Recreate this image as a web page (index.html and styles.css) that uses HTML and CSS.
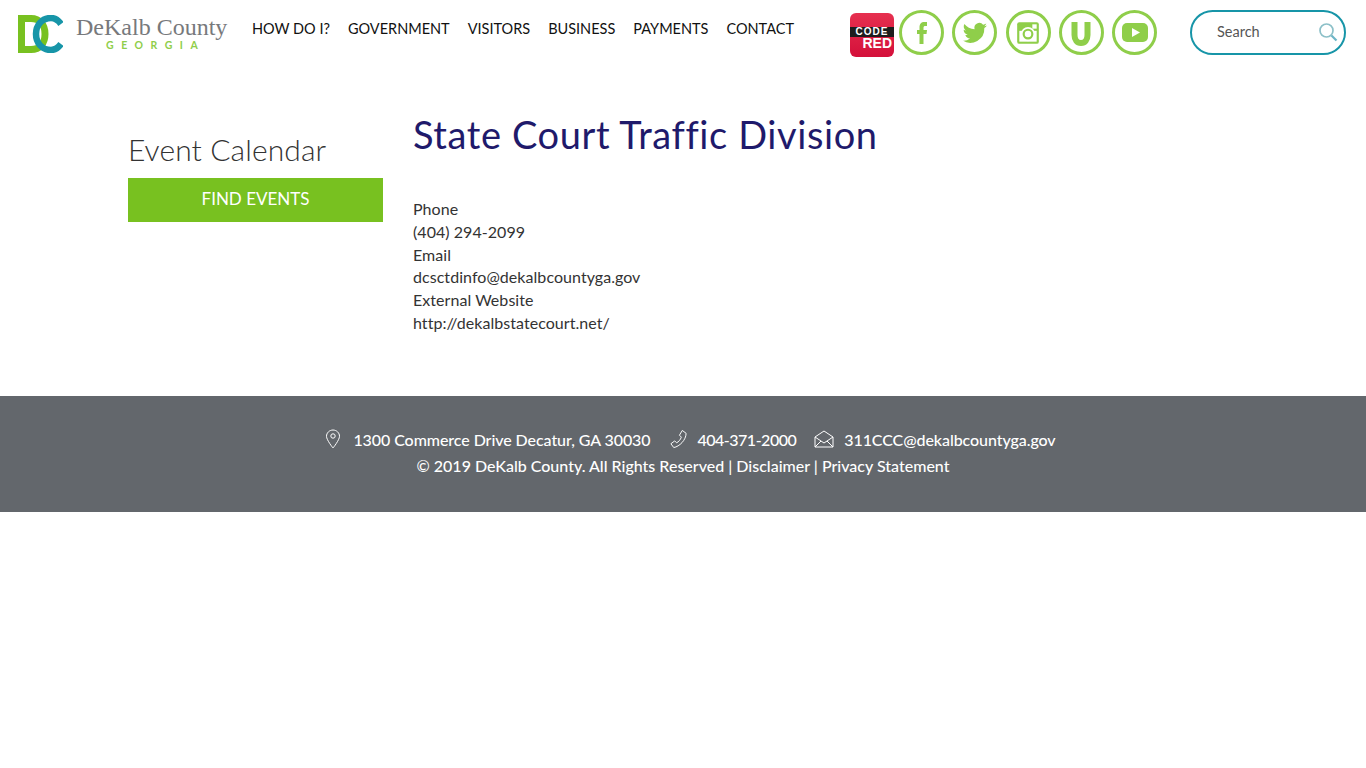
FILE: index.html
```html
<!DOCTYPE html>
<html lang="en">
<head>
<meta charset="utf-8">
<title>State Court Traffic Division</title>
<link rel="stylesheet" href="styles.css">
</head>
<body>
<header class="top">
  <a class="logo" href="#">
    <svg class="logo-mark" width="45" height="38" viewBox="0 0 45 38"><path d="M3.500 3.500h9.500c9 0 14 6.500 14 15.500s-5 15.500-14 15.500H3.500z" fill="none" stroke="#78c120" stroke-width="7"/><path d="M43 9c-2.500-3.500-6-6-10-6-9 0-15 7-15 16s6 16 15 16c4 0 7.500-2.500 10-6" fill="none" stroke="#1795a8" stroke-width="6.500"/></svg>
    <span class="logo-text"><span class="logo-name">DeKalb County</span><span class="logo-sub">GEORGIA</span></span>
  </a>
  <nav class="nav">
    <a href="#">HOW DO I?</a><a href="#">GOVERNMENT</a><a href="#">VISITORS</a><a href="#">BUSINESS</a><a href="#">PAYMENTS</a><a href="#">CONTACT</a>
  </nav>
  <div class="social">
    <a class="codered" href="#"><span class="cr-code">CODE</span><span class="cr-red">RED</span></a>
    <a class="ring" href="#"><svg width="26" height="26" viewBox="0 0 26 26"><path d="M10.500 24V14H8v-4h2.500V7.500c0-3.500 1.500-5.500 5-5.500H18v4h-1.500c-1.500 0-2 .6-2 2v2H18l-.5 4h-3v10z" fill="#8fce4a"/></svg></a>
    <a class="ring" href="#"><svg width="26" height="26" viewBox="0 0 24 24"><path d="M23 5c-1 .4-1.700.6-2.600.7 1-.6 1.700-1.400 2-2.500-.9.5-1.900.9-2.900 1.100a4.600 4.600 0 0 0-7.900 4.200C7.800 8.300 4.400 6.500 2.200 3.700c-1.200 2-.6 4.600 1.400 6-.7 0-1.400-.2-2.100-.6 0 2.200 1.600 4.200 3.700 4.600-.7.200-1.400.2-2.100.1.600 1.900 2.300 3.200 4.300 3.200A9.300 9.300 0 0 1 .6 19a13 13 0 0 0 20-11.600c.9-.7 1.700-1.500 2.400-2.400z" fill="#8fce4a"/></svg></a>
    <a class="ring" href="#"><svg width="26" height="26" viewBox="0 0 24 24"><path d="M4 2h16a2 2 0 0 1 2 2v16a2 2 0 0 1-2 2H4a2 2 0 0 1-2-2V4a2 2 0 0 1 2-2z" fill="#8fce4a"/><rect x="4" y="10" width="16" height="10" fill="#fff"/><circle cx="12" cy="13" r="6.500" fill="#fff"/><circle cx="12" cy="13" r="4" fill="#fff" stroke="#8fce4a" stroke-width="2"/><rect x="16" y="4" width="4" height="4" fill="#fff"/></svg></a>
    <a class="ring" href="#"><svg width="26" height="28" viewBox="0 0 26 28"><path d="M6.500 3v13c0 5 2.500 8 6.500 8s6.500-3 6.500-8V3" fill="none" stroke="#8fce4a" stroke-width="6"/></svg></a>
    <a class="ring" href="#"><svg width="26" height="21" viewBox="0 0 26 21"><rect x="0" y="1" width="26" height="19" rx="5" fill="#8fce4a"/><path d="M10 6l8 4.500-8 4.500z" fill="#fff"/></svg></a>
  </div>
  <form class="search">
    <span class="search-text">Search</span>
    <svg class="search-icon" width="20" height="20" viewBox="0 0 20 20"><circle cx="8.500" cy="8.500" r="6.500" fill="none" stroke="#8cc0c8" stroke-width="1.700"/><path d="M13.500 13.500l5 5" stroke="#6db5c6" stroke-width="2.200"/></svg>
  </form>
</header>
<main class="content">
  <aside class="side">
    <h2 class="side-title">Event Calendar</h2>
    <a class="find" href="#">FIND EVENTS</a>
  </aside>
  <article class="detail">
    <h1 class="title">State Court Traffic Division</h1>
    <div class="info">
      <div>Phone</div><div>(404) 294-2099</div><div>Email</div><div>dcsctdinfo@dekalbcountyga.gov</div><div>External Website</div><div>http://dekalbstatecourt.net/</div>
    </div>
  </article>
</main>
<footer class="foot">
  <div class="foot-row">
    <svg class="ico-pin" width="16" height="20" viewBox="0 0 16 20"><path d="M8 1c-3.500 0-6.500 2.800-6.500 6.300C1.500 11 8 19 8 19s6.500-8 6.500-11.700C14.500 3.800 11.500 1 8 1z" fill="none" stroke="#fff"/><circle cx="8" cy="7" r="2.200" fill="none" stroke="#fff"/></svg>
    <span class="foot-item">1300 Commerce Drive Decatur, GA 30030</span>
    <svg width="19" height="20" viewBox="0 0 20 20"><path d="M14 1l4 3c0 7-7 14-13 15l-3-4 4-3 2 2c2-1 4-3 5-6l-2-2z" fill="none" stroke="#fff"/></svg>
    <span class="foot-item foot-phone">404-371-2000</span>
    <svg width="20" height="20" viewBox="0 0 20 20"><path d="M1 8l9-6 9 6v10H1zM1 8l9 6 9-6M1 18l6-6M19 18l-6-6" fill="none" stroke="#fff"/></svg>
    <span>311CCC@dekalbcountyga.gov</span>
  </div>
  <div class="foot-row2">© 2019 DeKalb County. All Rights Reserved | Disclaimer | Privacy Statement</div>
</footer>
</body>
</html>
```
FILE: styles.css
```css
* { box-sizing: border-box; }
html, body { margin: 0; background: #fff; }
body { font-family: "Lato", "Open Sans", sans-serif; color: #333; font-variant-ligatures: none; }
a { color: inherit; text-decoration: none; }
.top { display: flex; align-items: center; height: 65px; padding-left: 18px; }
.logo { display: flex; align-items: center; width: 234px; gap: 13px; margin-top: 2px; }
.logo-text { display: flex; flex-direction: column; align-items: center; margin-top: -1px; }
.logo-name { font-family: "Liberation Serif", serif; font-size: 24px; color: #77797c; line-height: 24px; white-space: nowrap; }
.logo-sub { font-size: 10.500px; font-weight: 700; letter-spacing: 7.500px; margin-right: -8px; color: #8fce4a; line-height: 12px; }
.nav { display: flex; font-size: 14.500px; color: #111; width: 598px; height: 58px; align-items: flex-start; padding-top: 20px; align-self: flex-start; }
.nav a { margin-right: 18px; white-space: nowrap; }
.social { display: flex; align-items: center; gap: 8.300px; width: 340px; }
.codered { width: 44px; height: 44px; margin: 4px -3.300px 0 0; border-radius: 6px; background: linear-gradient(#e6304f, #d4103a); display: flex; flex-direction: column; align-items: flex-end; justify-content: center; color: #fff; font: 700 10px/10px "Liberation Sans", sans-serif; padding-top: 7px; }
.cr-code { background: #1d1d1d; width: 100%; text-align: center; letter-spacing: 1px; }
.cr-red { font-size: 14px; line-height: 13px; padding-right: 2px; }
.ring { width: 45px; height: 45px; border: 3px solid #8fce4a; border-radius: 50%; display: flex; align-items: center; justify-content: center; }
.search { width: 156px; height: 45px; border: 2px solid #1795a8; border-radius: 23px; display: flex; align-items: center; justify-content: space-between; padding: 0 6px 2px 25px; font-size: 14.500px; color: #555; }
.content { display: flex; padding: 0 128px; height: 331px; }
.side { width: 255px; margin-right: 30px; padding-top: 66px; }
.side-title { margin: 0 0 10px; font-size: 30px; font-weight: 300; letter-spacing: .1px; line-height: 37px; color: #333; }
.find { display: block; height: 44px; line-height: 42px; text-align: center; background: #78c120; color: #fff; font-size: 17px; }
.detail { flex: 1; padding-top: 47px; }
.title { margin: 0 0 42px; font-size: 38px; font-weight: 400; letter-spacing: .6px; line-height: 44px; color: #1f1a6b; }
.info { font-size: 16px; line-height: 22.800px; letter-spacing: .05px; color: #333; }
.foot { height: 116px; background: #63676c; color: #fff; font-size: 16px; font-weight: 500; text-align: center; padding-top: 31px; }
.foot-row { display: flex; justify-content: center; align-items: center; gap: 10px; height: 24px; padding-left: 15px; letter-spacing: -.07px; }
.foot-item { margin-right: 8px; }
.foot-phone { letter-spacing: -.5px; }
.ico-pin { margin-right: 2px; }
.foot-row2 { margin-top: 3px; line-height: 24px; }
```
